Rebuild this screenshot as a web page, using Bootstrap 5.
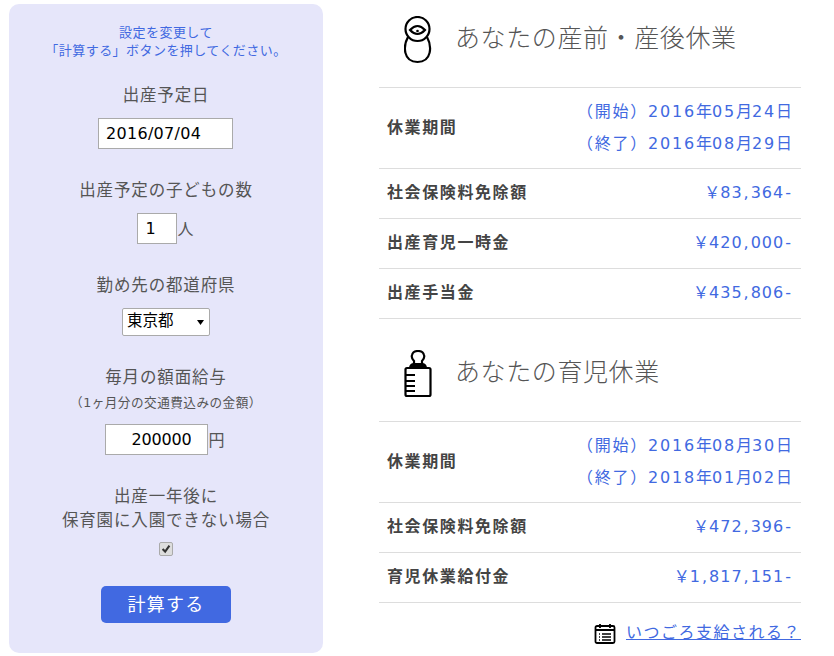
<!DOCTYPE html>
<html lang="ja">
<head>
<meta charset="utf-8">
<title>休業</title>
<link href="https://cdn.jsdelivr.net/npm/bootstrap@5.3.0/dist/css/bootstrap.min.css" rel="stylesheet">
<style>
html,body{height:656px;overflow:hidden}
body{background:#fff;color:#555;font-family:"DejaVu Sans","Noto Sans CJK JP",sans-serif;font-size:16px;font-weight:400}
.page-wrap{width:834px;padding:4px 33px 0 9px;gap:56px}
.side-panel{width:314px;height:649px;background:#e6e6fa;border-radius:10px;padding-top:20px;flex:none}
.note-text{color:#4169e1;font-size:13px;line-height:18px;letter-spacing:.45px;margin-bottom:24px}
.field-label{font-size:16.5px;line-height:24px;letter-spacing:.85px;margin-bottom:11px}
.label-first{margin-bottom:10px}
.label-select{margin-bottom:10px}
.field-sub{font-size:12.6px;line-height:18px;letter-spacing:.5px;margin:4px 0 12px}
.field-block{margin-bottom:30px}
.label-tight{margin-bottom:10px}
.plain-input{border:1px solid #aaa;background:#fff;color:#000;font:inherit;font-size:16px;height:31px;padding:0 7px;border-radius:0;letter-spacing:.3px;outline:0;box-sizing:border-box}
.date-input{width:135px;margin-right:1px}
.num-input{width:40px}
.money-input{width:103px;text-align:right;padding-right:16px;letter-spacing:-.2px}
.unit-text{font-size:16px;padding-top:2px}
.nudge-left{padding-right:1px}
.nudge-more{padding-right:2px}
.pref-select{width:88px;height:28px;padding:0 0 0 4px;border:1px solid #aaa;border-radius:2px;background-color:#fff;color:#000;font-size:15.5px;font-family:inherit;background-image:url("data:image/svg+xml,%3Csvg xmlns='http://www.w3.org/2000/svg' viewBox='0 0 7 5'%3E%3Cpath d='M0 0h7L3.500 5z' fill='%23000'/%3E%3C/svg%3E");background-position:right 5px center;background-size:7px 5px;box-shadow:none}
.check-box{appearance:none;width:14px;height:14px;display:block;margin:9px auto 0;border:1px solid #aaa;border-radius:2px;background:#ddd url("data:image/svg+xml,%3Csvg xmlns='http://www.w3.org/2000/svg' viewBox='0 0 14 14'%3E%3Cpath d='M3 7l3 3 5-7' fill='none' stroke='%23333' stroke-width='2.4'/%3E%3C/svg%3E") center/contain no-repeat}
.calc-btn{width:130px;height:37px;background:#4169e1;color:#fff;border:0;border-radius:5px;font-size:18px;letter-spacing:1.2px;padding:0;line-height:37px}
.calc-btn:hover{background:#4169e1;color:#fff}
.result-col{width:422px;flex:none}
.sec-head{height:83px;padding:12px 0 0 25px;gap:23px}
.sec-title{font-size:25px;font-weight:300;color:#555;margin:5px 0 0;line-height:36px;letter-spacing:.6px}
.sec-later{margin-top:19px}
.res-table{margin:0;border-top:1px solid #ddd;color:#555}
.res-table td{border-bottom:1px solid #ddd;padding:0 9px 2px;height:50px;vertical-align:middle;background:transparent;color:#555}
.res-table th{border-bottom:1px solid #ddd;padding:0 8px 2px;height:50px;vertical-align:middle;font-size:16px;font-weight:700;letter-spacing:1.6px;color:#444;background:transparent}
.res-table tr:first-child th{padding-bottom:0}
.res-val{color:#4169e1!important;text-align:right;font-size:16px;white-space:nowrap}
.res-table .date-row{line-height:32px;padding-top:8px;padding-bottom:8px}
.prn{letter-spacing:1.75px}
.dgt{letter-spacing:1.8px}
.amt-dgt{letter-spacing:1px}
.cma{letter-spacing:2px;padding-left:1px}
.dsh{padding:0 1px}
.when-link{height:60px;gap:10px;font-size:16px;letter-spacing:1.5px}
.when-link a{color:#4169e1}
</style>
</head>
<body>
<div class="page-wrap d-flex align-items-start">
  <form class="side-panel text-center">
    <p class="note-text">設定を変更して<br>「計算する」ボタンを押してください。</p>
    <div class="field-block">
      <div class="field-label label-first">出産予定日</div>
      <input class="plain-input date-input" type="text" value="2016/07/04">
    </div>
    <div class="field-block">
      <div class="field-label label-tight">出産予定の子どもの数</div>
      <div class="d-flex justify-content-center align-items-center nudge-left">
        <input class="plain-input num-input" type="text" value="1"><span class="unit-text">人</span>
      </div>
    </div>
    <div class="field-block">
      <div class="field-label label-select">勤め先の都道府県</div>
      <select class="form-select pref-select mx-auto"><option>東京都</option></select>
    </div>
    <div class="field-block">
      <div class="field-label mb-0">毎月の額面給与</div>
      <div class="field-sub">（1ヶ月分の交通費込みの金額）</div>
      <div class="d-flex justify-content-center align-items-center nudge-more">
        <input class="plain-input money-input" type="text" value="200000"><span class="unit-text">円</span>
      </div>
    </div>
    <div class="field-block">
      <div class="field-label mb-0">出産一年後に<br>保育園に入園できない場合</div>
      <input class="check-box" type="checkbox" checked>
    </div>
    <button type="button" class="btn calc-btn">計算する</button>
  </form>
  <main class="result-col">
    <div class="sec-head d-flex align-items-start">
      <svg width="28" height="48" viewBox="0 0 28 48" fill="none" stroke="#000" stroke-width="2.2"><ellipse cx="13.500" cy="13" rx="12" ry="12"/><path d="M6 14Q13.500 6 21 14Q13.500 22 6 14Z"/><circle cx="13.500" cy="15" r="1.300" fill="#000" stroke="none"/><path d="M4 21C-1 30-1 46 13.500 46S28 30 23 21"/></svg>
      <h2 class="sec-title">あなたの産前・産後休業</h2>
    </div>
    <table class="table res-table">
      <tbody>
        <tr><th>休業期間</th><td class="res-val date-row"><span class="prn">（開始）</span><span class="dgt">2016</span>年<span class="dgt">05</span>月<span class="dgt">24</span>日<br><span class="prn">（終了）</span><span class="dgt">2016</span>年<span class="dgt">08</span>月<span class="dgt">29</span>日</td></tr>
        <tr><th>社会保険料免除額</th><td class="res-val">￥<span class="amt-dgt">83</span><span class="cma">,</span><span class="amt-dgt">364</span><span class="dsh">-</span></td></tr>
        <tr><th>出産育児一時金</th><td class="res-val">￥<span class="amt-dgt">420</span><span class="cma">,</span><span class="amt-dgt">000</span><span class="dsh">-</span></td></tr>
        <tr><th>出産手当金</th><td class="res-val">￥<span class="amt-dgt">435</span><span class="cma">,</span><span class="amt-dgt">806</span><span class="dsh">-</span></td></tr>
      </tbody>
    </table>
    <div class="sec-head sec-later d-flex align-items-start">
      <svg width="28" height="48" viewBox="0 0 28 48" fill="none" stroke="#000" stroke-width="2.2"><path d="M10 14V11Q7 8 8 5Q9 1 14 1T20 5Q21 8 18 11V14"/><path d="M6 18Q6.500 14 10 14h8q3.500 0 4 4" fill="#000"/><rect x="1.500" y="18" width="25" height="28" rx="1.500"/><path d="M2 25h9M2 31h9M2 36h9M2 41h9" stroke-width="1.800"/></svg>
      <h2 class="sec-title">あなたの育児休業</h2>
    </div>
    <table class="table res-table">
      <tbody>
        <tr><th>休業期間</th><td class="res-val date-row"><span class="prn">（開始）</span><span class="dgt">2016</span>年<span class="dgt">08</span>月<span class="dgt">30</span>日<br><span class="prn">（終了）</span><span class="dgt">2018</span>年<span class="dgt">01</span>月<span class="dgt">02</span>日</td></tr>
        <tr><th>社会保険料免除額</th><td class="res-val">￥<span class="amt-dgt">472</span><span class="cma">,</span><span class="amt-dgt">396</span><span class="dsh">-</span></td></tr>
        <tr><th>育児休業給付金</th><td class="res-val">￥<span class="amt-dgt">1</span><span class="cma">,</span><span class="amt-dgt">817</span><span class="cma">,</span><span class="amt-dgt">151</span><span class="dsh">-</span></td></tr>
      </tbody>
    </table>
    <div class="when-link d-flex align-items-center justify-content-end">
      <svg width="22" height="21" viewBox="0 0 22 21" fill="none" stroke="#000" stroke-width="1.800"><rect x="1.500" y="3" width="19" height="17" rx="1.500"/><path d="M1.500 7h19M6 1v4M16 1v4"/><path d="M5 11h1M8 11h9M5 14h1M8 14h9M5 17h1M8 17h9" stroke-width="1.300"/></svg>
      <a href="#">いつごろ支給される？</a>
    </div>
  </main>
</div>
</body>
</html>
